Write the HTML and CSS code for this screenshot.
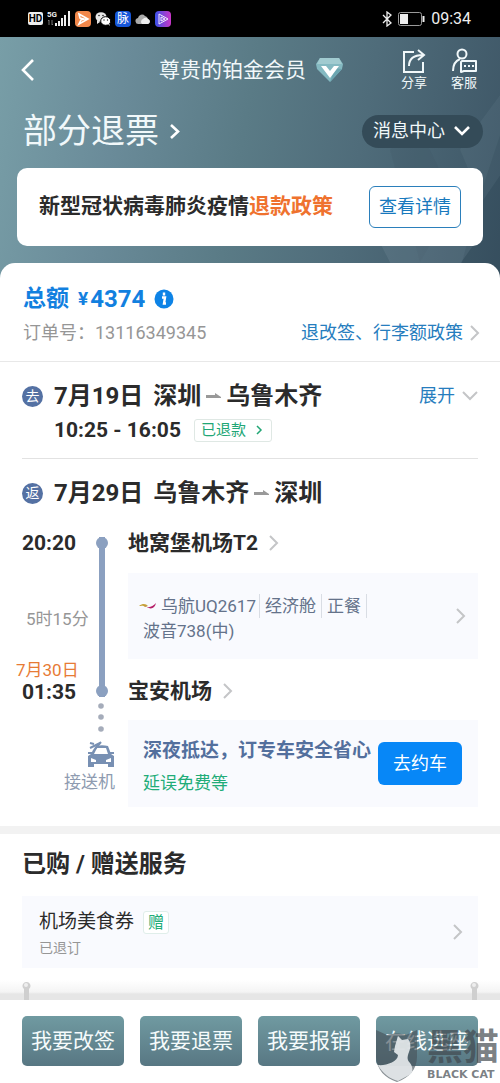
FILE: index.html
```html
<!DOCTYPE html>
<html lang="zh-CN">
<head>
<meta charset="utf-8">
<meta name="viewport" content="width=device-width, initial-scale=1">
<title>订单详情</title>
<link rel="stylesheet" href="styles.css">
</head>
<body>
<div class="page">
  <div class="status">
    <div class="status-left">
      <span class="hd">HD</span>
      <svg width="24" height="17" viewBox="0 0 24 17"><g class="net"><text x="0" y="7">5G</text></g><g fill="#eee"><rect x="8" y="13" width="2" height="3"/><rect x="11" y="11" width="2" height="5"/><rect x="14" y="8" width="2" height="8"/><rect x="17" y="5" width="2" height="11"/><rect x="21" y="1" width="2" height="15"/></g><path d="M2 10v5M1 11l1-1M5 10v5m1-1-1 1" stroke="#777" fill="none"/></svg>
      <svg width="16" height="16" viewBox="0 0 16 16"><rect width="16" height="16" rx="4" fill="#f2884b"/><path d="M4 3l9 5-9 5 2-4 3-1-4-1z" fill="none" stroke="#fff" stroke-width="1.6"/></svg>
      <svg width="16" height="16" viewBox="0 0 16 16"><ellipse cx="6" cy="6" rx="5.5" ry="4.8" fill="#e8e8e8"/><path d="M2 9l0 4 3-2z" fill="#e8e8e8"/><ellipse cx="10.700" cy="10" rx="5" ry="4.300" fill="#fff" stroke="#000"/><path d="M13 13l2 2-1-3z" fill="#fff"/><g fill="#222"><circle cx="4" cy="4.500" r=".8"/><circle cx="8" cy="4.500" r=".8"/><circle cx="9" cy="9" r=".7"/><circle cx="12.500" cy="9" r=".7"/></g></svg>
      <span class="mai">脉</span>
      <svg width="16" height="16" viewBox="0 0 16 16"><path d="M4 13a3 3 0 0 1-1-6 4 4 0 0 1 7-2 4 4 0 0 1 3 3 2.600 2.600 0 0 1 0 5z" fill="#aaa"/><path d="M7 13a3 3 0 0 1 1-5 3 3 0 0 1 5 0 2.600 2.600 0 0 1 0 5z" fill="#eee"/></svg>
      <svg width="16" height="16" viewBox="0 0 16 16"><defs><linearGradient id="vid"><stop stop-color="#3a52e8"/><stop offset="1" stop-color="#c936c8"/></linearGradient></defs><rect width="16" height="16" rx="4" fill="url(#vid)"/><path d="M4 3v10l9-5zM6 6v4l4-2z" fill="none" stroke="#eef" stroke-width="1"/></svg>
    </div>
    <div class="status-right">
      <svg width="10" height="16" viewBox="0 0 10 16"><path d="M1 4l8 8-4 3V1l4 3-8 8" fill="none" stroke="#eee" stroke-width="1.300"/></svg>
      <svg width="27" height="14" viewBox="0 0 27 14"><rect x=".5" y=".5" width="23" height="13" rx="2" fill="none" stroke="#999"/><rect x="2" y="2" width="8" height="10" fill="#eee"/><path d="M25.500 4v6" stroke="#eee" stroke-width="2"/></svg>
      <span>09:34</span>
    </div>
  </div>

  <header class="hero">
    <svg class="facets" viewBox="0 0 500 240" preserveAspectRatio="none" aria-hidden="true"><path d="M390 112l28-24 37 76-35 60z" fill="#243c4c" opacity=".07"/><path d="M500 98v142h-42l20-76z" fill="#203746" opacity=".2"/><path d="M380 205h95l-25 35h-52z" fill="#9ab3bd" opacity=".14"/><path d="M460 112l40-54v80l-18 26z" fill="#8da8b4" opacity=".1"/></svg>
    <div class="topbar">
      <button class="plain back" aria-label="返回"><svg width="14" height="24" viewBox="0 0 14 24"><path d="M12 2L2 12l10 10" fill="none" stroke="#fff" stroke-width="2.600"/></svg></button>
      <div class="member">尊贵的铂金会员
        <svg width="27" height="26" viewBox="0 0 27 26"><path d="M4 1h19l4 6-1 5-12 13L1 12 0 7z" fill="#84b9c1"/><path d="M4 1h19l3 6H1z" fill="#a1cbd0"/><path d="M14 25l12-13-7-1z" fill="#6ba5b0"/><path d="M5 9h5l4 5 4-5h5l-9 12z" fill="#fff"/></svg>
      </div>
      <div class="tools">
        <button class="plain tool"><svg width="26" height="26" viewBox="0 0 26 26"><path d="M13 4H3v20h19V14M8 18c0-7 4-11 14-11M17 2l6 5-6 5" fill="none" stroke="#f1f8fa" stroke-width="2"/></svg>分享</button>
        <button class="plain tool"><svg width="26" height="26" viewBox="0 0 26 26"><circle cx="11" cy="6" r="4.500" fill="none" stroke="#f1f8fa" stroke-width="2"/><path d="M2 23c0-6 2-10 7-12M11 13h14v10H13l-3 1V14z" fill="none" stroke="#f1f8fa" stroke-width="2" stroke-linejoin="round"/><path d="M13 18h2m2 0h2m2 0h2" stroke="#f1f8fa" stroke-width="2"/></svg>客服</button>
      </div>
    </div>
    <div class="state">
      <h1>部分退票 <svg width="12" height="17" viewBox="0 0 12 17"><path d="M2 2l7 6.500L2 15" fill="none" stroke="#fff" stroke-width="2.600"/></svg></h1>
      <button class="plain messages">消息中心 <svg width="16" height="12" viewBox="0 0 16 12"><path d="M1 2l7 7 7-7" fill="none" stroke="#fff" stroke-width="2.600"/></svg></button>
    </div>
    <div class="notice">
      <p>新型冠状病毒肺炎疫情<span>退款政策</span></p>
      <button class="details">查看详情</button>
    </div>
  </header>

  <main class="sheet">
    <section class="summary">
      <div class="total"><span>总额</span><span class="yen">¥</span><span class="amount">4374</span>
        <svg width="20" height="20" viewBox="0 0 20 20"><circle cx="10" cy="10" r="9.500" fill="#0d83e6"/><path d="M10 3.500v3M8 8.500h3l-1 6h2" fill="none" stroke="#fff" stroke-width="2.400"/></svg></div>
      <div class="order"><span class="number">订单号：13116349345</span><a class="link" href="#">退改签、行李额政策 <svg width="10" height="16" viewBox="0 0 10 16"><path d="M1 1l7 7-7 7" class="chev"/></svg></a></div>
    </section>

    <section class="leg outbound">
      <div class="leg-title"><span class="round">去</span><h2>7月19日</h2><h2 class="route">深圳 <svg width="15" height="6" viewBox="0 0 15 6"><path d="M0 2h9V0l6 4v1H0z" fill="#999"/></svg> 乌鲁木齐</h2><button class="plain link expand">展开 <svg width="16" height="10" viewBox="0 0 16 10"><path d="M1 1l7 7 7-7" class="chev"/></svg></button></div>
      <div class="times"><b>10:25 - 16:05</b><button class="refund">已退款 <svg width="7" height="10" viewBox="0 0 7 10"><path d="M1 1l4 4-4 4" fill="none" stroke="#21a675" stroke-width="1.500"/></svg></button></div>
    </section>

    <section class="leg inbound">
      <div class="leg-title"><span class="round">返</span><h2>7月29日</h2><h2 class="route">乌鲁木齐 <svg width="15" height="6" viewBox="0 0 15 6"><path d="M0 2h9V0l6 4v1H0z" fill="#999"/></svg> 深圳</h2></div>
      <div class="trip">
        <div class="clock depart">20:20</div>
        <div class="rail"><span class="line"></span></div>
        <div class="airport depart">地窝堡机场T2 <svg width="10" height="16" viewBox="0 0 10 16"><path d="M1 1l7 7-7 7" class="chev"/></svg></div>
        <div class="duration">5时15分</div>
        <a class="panel flight" href="#">
          <span class="flight-text"><span class="specs"><span class="spec"><svg width="17" height="8" viewBox="0 0 17 8"><path d="M0 4c4-3 7-2 9 0l-3 1c-2-2-4-1-6-1z" fill="#c6a43b"/><path d="M5 3c4 4 8 2 12-2-1 5-5 7-9 4z" fill="#b51f68"/></svg>乌航UQ2617</span><span class="spec">经济舱</span><span class="spec">正餐</span></span><span>波音738(中)</span></span>
          <svg width="10" height="16" viewBox="0 0 10 16"><path d="M1 1l7 7-7 7" class="chev"/></svg>
        </a>
        <div class="clock arrive"><span>7月30日</span>01:35</div>
        <div class="airport arrive">宝安机场 <svg width="10" height="16" viewBox="0 0 10 16"><path d="M1 1l7 7-7 7" class="chev"/></svg></div>
        <div class="pickup">
          <svg class="dots" width="6" height="32" viewBox="0 0 6 32"><g fill="#a5acba"><circle cx="3" cy="4" r="2.800"/><circle cx="3" cy="15" r="2.800"/><circle cx="3" cy="27" r="2.800"/></g></svg>
          <svg width="28" height="28" viewBox="0 0 28 28"><path d="M6 10l3-4c4-1 8-1 12 0l3 8 3 2v11h-6v-3H7v3H1V16l3-2z" fill="#7890b3"/><path d="M10 8h9l2 6H7z" fill="#fff"/><path d="M1 13h4m18 0h4M3 8l10-5M3 3l4 1M8 9l6-7" stroke="#7890b3" stroke-width="2"/><path d="M4 18l5 2v2H4zm20 0l-5 2v2h5z" fill="#fff"/></svg>
          <span>接送机</span>
        </div>
        <div class="panel ride"><div class="ride-text"><b>深夜抵达，订专车安全省心</b><span>延误免费等</span></div><button class="book">去约车</button></div>
      </div>
    </section>

    <section class="services">
      <h2>已购 / 赠送服务</h2>
      <a class="panel coupon" href="#"><span><span class="coupon-name">机场美食券 <span class="gift">赠</span></span><span class="cancelled">已退订</span></span><svg width="10" height="16" viewBox="0 0 10 16"><path d="M1 1l7 7-7 7" class="chev"/></svg></a>
    </section>
    <div class="peek"><svg width="10" height="20" viewBox="0 0 10 20"><path d="M3 20V9a4 4 0 1 1 5 0v11z" fill="#cfcfcf"/><circle cx="5" cy="5" r="2" fill="#eee"/></svg><svg width="10" height="20" viewBox="0 0 10 20"><path d="M3 20V9a4 4 0 1 1 5 0v11z" fill="#cfcfcf"/><circle cx="5" cy="5" r="2" fill="#eee"/></svg></div>
  </main>

  <footer class="actions">
    <button>我要改签</button><button>我要退票</button><button>我要报销</button><button>在线选座</button>
    <div class="mark">
      <svg width="42" height="54" viewBox="0 0 42 54"><path d="M0 1l11 5c6-2 13-2 19 0l11-5v27c0 12-8 21-20 25C9 49 1 41 0 28z" fill="#48535a" opacity=".65"/><path d="M22 7l4 4 6-1c3 4 3 8 1 13-2 5-2 8 1 11 3 4 3 8 1 11l-13 7C14 50 6 44 2 36c7 1 20-3 20-10l-4-3 1-6z" fill="#e4e8ea" opacity=".92"/></svg>
      <div class="mark-text"><b>黑猫</b><span>BLACK CAT</span></div>
    </div>
  </footer>
</div>
</body>
</html>
```
FILE: styles.css
```css
* { box-sizing: border-box; }
body { margin: 0; background: #fff; color: #2b2b2b; font: 17px/24px Roboto, "Noto Sans CJK SC", sans-serif; }
h1, h2, p { margin: 0; }
svg { flex: none; display: block; }
button { font: inherit; cursor: pointer; white-space: nowrap; }
a { text-decoration: none; color: inherit; }
.plain { background: none; border: 0; padding: 0; color: inherit; }
.chev { fill: none; stroke: #c4c5c7; stroke-width: 2; }
.page { min-height: 100vh; display: flex; flex-direction: column; }

.status { height: 37px; padding: 0 29px 0 28px; background: #000; color: #eee; display: flex; align-items: center; justify-content: space-between; }
.status-left { display: flex; align-items: center; gap: 4px; }
.status-right { display: flex; align-items: center; gap: 6px; font-size: 16px; }
.hd { background: #eee; color: #000; border-radius: 2px; font-size: 10px; line-height: 13px; font-weight: 700; width: 15px; text-align: center; }
.net { font-size: 8px; font-weight: 700; fill: #eee; }
.mai { width: 16px; height: 16px; border-radius: 4px; background: #1656d8; color: #fff; font-size: 12px; line-height: 16px; text-align: center; }

.hero { position: relative; color: #f1f8fa; padding: 0 17px 32px; margin-bottom: -15px; background: linear-gradient(100deg, #789ea7 0%, #6a8b99 24%, #5a7b86 48%, #4f6c7a 70%, #3d5565 100%); }
.facets { position: absolute; inset: 0; width: 100%; height: 100%; }
.topbar, .state, .notice { position: relative; display: flex; align-items: center; justify-content: space-between; }
.topbar { height: 66px; padding: 0 6px 0 4px; }
.member { display: flex; align-items: center; gap: 10px; font-size: 21px; margin-left: 92px; }
.back { margin-right: 32px; }
.tools { display: flex; gap: 24px; margin-left: auto; }
.tool { display: flex; flex-direction: column; align-items: center; font-size: 13px; line-height: 18px; }
.state { height: 65px; padding: 0 0 9px 6px; }
h1 { display: flex; align-items: center; gap: 10px; font-size: 34px; line-height: 48px; font-weight: 400; }
.messages { display: flex; align-items: center; gap: 9px; height: 33px; padding: 0 13px 0 11px; border-radius: 17px; background: #344b58; font-size: 18px; }
.notice { min-height: 78px; padding: 0 22px; border-radius: 10px; background: #fff; color: #2b2b2b; font-size: 21px; }
.notice span { color: #ef722e; }
.notice p { white-space: nowrap; font-weight: 700; padding-bottom: 3px; }
.details { height: 42px; padding: 0 9px; font-size: 18px; color: #1879bd; background: #fff; border: 1px solid #2b7fbb; border-radius: 6px; }

.sheet { position: relative; flex: 1; display: flex; flex-direction: column; background: #fff; border-radius: 15px 15px 0 0; }
.summary { padding: 20px 20px 10px 23px; border-bottom: 1px solid #e8e8e8; }
.total { display: flex; align-items: center; height: 32px; color: #1280df; font-size: 23px; font-weight: 700; }
.yen { font-size: 19px; margin-left: 9px; }
.amount { margin: 0 9px 0 2px; font-size: 24px; }
.order { display: flex; justify-content: space-between; align-items: center; height: 36px; font-size: 18px; }
.number { color: #969696; }
.link { color: #267dbe; display: flex; align-items: center; gap: 7px; font-size: 18px; }

.leg { margin: 0 22px; }
.outbound { padding: 18px 0 12px; border-bottom: 1px solid #e2e2e2; }
.inbound { padding-top: 18px; }
.leg-title { display: flex; align-items: center; height: 32px; }
.round { width: 21px; height: 21px; margin-right: 11px; border-radius: 50%; background: #5471a3; color: #fff; font-size: 14px; line-height: 20px; text-align: center; }
h2 { font-size: 24px; line-height: 32px; font-weight: 700; }
.route { display: flex; align-items: center; gap: 5px; margin-left: 10px; }
.expand { margin-left: auto; }
.times { display: flex; align-items: center; height: 32px; margin-top: 2px; padding-left: 32px; font-size: 21px; gap: 13px; }
.refund { display: flex; align-items: center; gap: 10px; height: 23px; padding: 0 8px 0 6px; border: 1px solid #dfe8e4; border-radius: 3px; background: #fff; color: #21a675; font-size: 15px; }

.trip { display: grid; grid-template-columns: 66px 26px minmax(0, 1fr); grid-template-rows: 64px 86px 61px 87px; column-gap: 7px; }
.clock { grid-column: 1; font-size: 21px; font-weight: 700; }
.depart { grid-row: 1; padding-top: 22px; }
.arrive { grid-row: 3; padding-top: 20px; }
.clock.arrive { padding-top: 0; display: flex; flex-direction: column; align-items: flex-start; line-height: 22px; }
.clock.arrive span { margin-left: -6px; color: #e77b35; font-size: 17px; font-weight: 400; }
.airport { grid-column: 3; align-self: start; display: flex; align-items: center; gap: 11px; font-size: 21px; font-weight: 700; }
.rail { grid-column: 2; grid-row: 1 / 4; padding: 28px 0 23px; display: flex; justify-content: center; margin-left: -12px; }
.line { width: 6px; background: #8ba0c0; position: relative; }
.line::before, .line::after { content: ""; position: absolute; left: -3px; width: 12px; height: 12px; border-radius: 50%; background: #8ba0c0; }
.line::before { top: 0; }
.line::after { bottom: 0; }
.duration { grid-column: 1; grid-row: 2; align-self: center; padding: 6px 0 0 4px; color: #969696; white-space: nowrap; }
.panel { background: #f9fafe; display: flex; align-items: center; justify-content: space-between; }
.flight { grid-column: 3; grid-row: 2; padding: 0 12px 0 15px; color: #64728a; }
.flight-text { display: flex; flex-direction: column; gap: 1px; padding-top: 4px; }
.specs { display: flex; margin-left: -4px; }
.spec { display: flex; align-items: center; gap: 5px; padding: 0 5px; border-right: 1px solid #d9dde4; white-space: nowrap; }
.spec:first-child { padding: 0 3px 0 0; }
.pickup { grid-column: 1 / 3; grid-row: 3 / 5; margin-top: 43px; display: flex; flex-direction: column; align-items: flex-end; padding-right: 6px; color: #8e9bb0; line-height: 24px; }
.pickup svg { margin-bottom: 2px; }
.pickup .dots { margin: 0 11px 6px 0; }
.ride { grid-column: 3; grid-row: 4; padding: 0 16px 0 15px; }
.ride-text { display: flex; flex-direction: column; gap: 8px; padding-top: 6px; min-width: 0; white-space: nowrap; color: #536f9d; font-size: 19px; }
.ride-text span { color: #21ac78; font-size: 17px; }
.book { flex: none; height: 43px; padding: 0 15px; border: 0; border-radius: 6px; background: #0787f7; color: #fff; font-size: 18px; }

.services { margin-top: 19px; padding: 14px 22px 0; border-top: 8px solid #f2f2f2; }
.coupon { margin-top: 16px; height: 72px; padding: 0 15px 0 17px; }
.coupon-name { display: flex; align-items: center; gap: 9px; padding-top: 4px; font-size: 19px; line-height: 28px; }
.gift { padding: 0 4px; border: 1px solid #e0eeea; border-radius: 3px; background: #fff; color: #21ac78; font-size: 16px; line-height: 21px; }
.cancelled { display: block; color: #969696; font-size: 14px; line-height: 24px; }
.peek { margin-top: auto; height: 20px; padding: 0 21px; display: flex; justify-content: space-between; background: linear-gradient(#fff, #f4f4f4 60%, #e6e6e6 70%, #e6e6e6); }

.actions { position: sticky; bottom: 0; display: flex; gap: 16px; padding: 16px 22px 17px; background: #fff; }
.actions button { flex: 1; height: 50px; padding: 0; border: 0; border-radius: 5px; background: linear-gradient(#709aa1, #587783); color: #f5fbfc; font-size: 21px; }
.mark { position: absolute; right: 0; bottom: 0; display: flex; gap: 9px; pointer-events: none; }
.mark-text { display: flex; flex-direction: column; width: 73px; color: rgba(65, 72, 78, .7); white-space: nowrap; }
.mark-text b { font-size: 36px; line-height: 38px; font-weight: 700; }
.mark-text span { font: 700 11px/16px "DejaVu Sans", sans-serif; }
```
